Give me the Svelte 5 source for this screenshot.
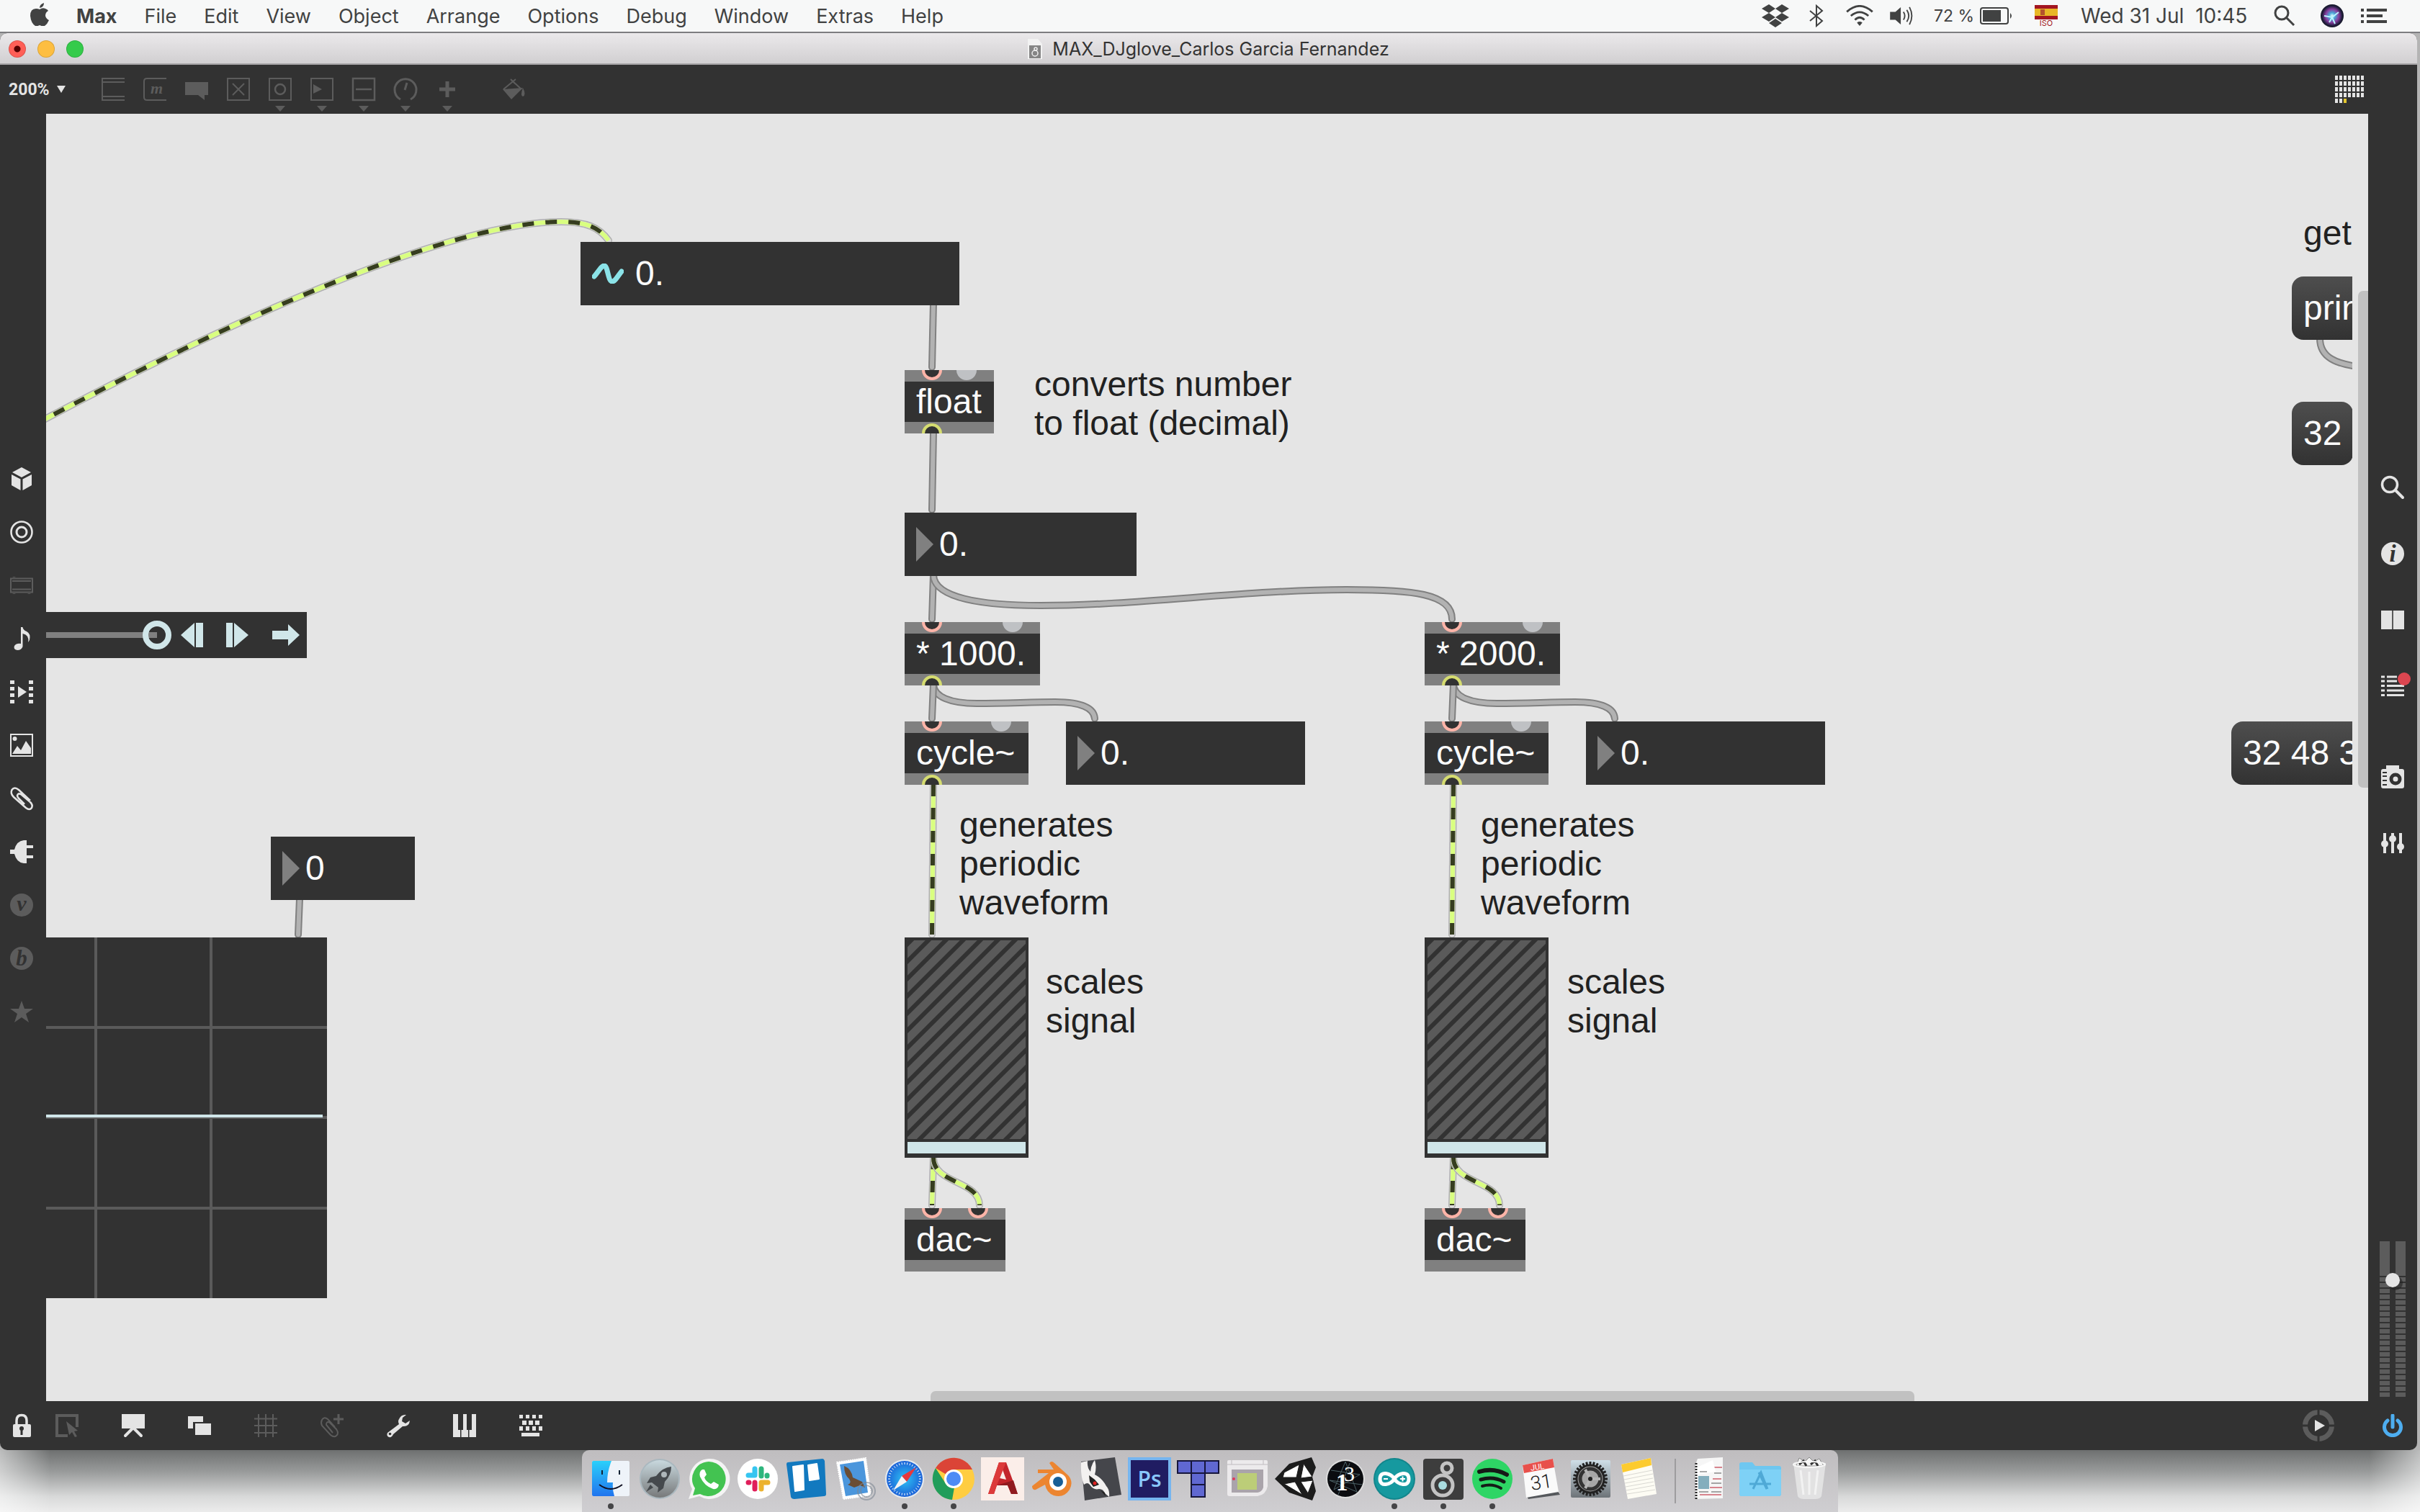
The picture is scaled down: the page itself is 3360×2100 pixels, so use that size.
<script>
  const menus = ['File', 'Edit', 'View', 'Object', 'Arrange', 'Options', 'Debug', 'Window', 'Extras', 'Help'];

  const ink = '#e4e4e4';

  // All toolbar glyphs are drawn on a 32 by 32 grid with currentColor.
  const glyphs = {
    object: '<path d="M1 0V32M2 1H32M2 6H32M2 26H32M2 31H32" fill="none" stroke="currentColor" stroke-width="2"/>',
    message: '<path d="M32 1H5Q1 1 1 5V27Q1 31 5 31H32" fill="none" stroke="currentColor" stroke-width="2"/><text x="10" y="22" font-family="Liberation Serif, serif" font-style="italic" font-weight="700" font-size="22" fill="currentColor">m</text>',
    comment: '<path d="M0 6H32V24H27V31L18 24H0Z" fill="currentColor"/>',
    toggle: '<path d="M1 1H31V31H1ZM8 8L24 24M24 8L8 24" fill="none" stroke="currentColor" stroke-width="2"/>',
    button: '<path d="M1 1H31V31H1Z" fill="none" stroke="currentColor" stroke-width="2"/><circle cx="16" cy="16" r="7" fill="none" stroke="currentColor" stroke-width="2.5"/>',
    playbox: '<path d="M1 1H31V31H1Z" fill="none" stroke="currentColor" stroke-width="2"/><path d="M4 9L16 16 4 22Z" fill="currentColor"/>',
    slider: '<path d="M1 1H31V31H1ZM5 16H27" fill="none" stroke="currentColor" stroke-width="2.5"/>',
    dial: '<path d="M9 30A15 15 0 1 1 23 30" fill="none" stroke="currentColor" stroke-width="3"/><path d="M15 17L18 7" fill="none" stroke="currentColor" stroke-width="3"/>',
    plus: '<path d="M16 5V27M5 16H27" fill="none" stroke="currentColor" stroke-width="5"/>',
    paint: '<path d="M12 2L18 8M19 2L2 16M14 4L27 16" fill="none" stroke="currentColor" stroke-width="2"/><path d="M1 16L29 14 13 30ZM29 14Q34 24 29 26Q25 25 29 14Z" fill="currentColor"/>',
    cube: '<path d="M16 0L29 7 16 14 3 7ZM2 10L14.500 16.500V32L2 25ZM30 10L17.500 16.500V32L30 25Z" fill="currentColor"/>',
    target: '<circle cx="16" cy="16" r="14.500" fill="none" stroke="currentColor" stroke-width="2.600"/><circle cx="16" cy="16" r="7" fill="none" stroke="currentColor" stroke-width="3"/>',
    rack: '<path d="M1 6.500H31V25.500H1ZM3 10H29M3 21.500H29" fill="none" stroke="currentColor" stroke-width="2"/><path d="M3 5a3 2 0 0 1 5 0ZM3 27a3 2 0 0 0 5 0ZM24 27a3 2 0 0 0 5 0Z" fill="currentColor"/>',
    note: '<path d="M15 0H17.500Q18 4 23 6Q29 9 27 18L25 21Q27 11 17.500 9V27Q16 32 10 32Q4 31 6 26Q9 22 15 23Z" fill="currentColor"/>',
    film: '<path d="M0 0h6v5H0ZM0 9h6v5H0ZM0 18h6v5H0ZM0 27h6v5H0ZM26 0h6v5h-6ZM26 9h6v5h-6ZM26 18h6v5h-6ZM26 27h6v5h-6ZM11 8L23 16 11 24Z" fill="currentColor"/>',
    picture: '<path d="M1 1H31V31H1Z" fill="none" stroke="currentColor" stroke-width="2"/><circle cx="6.500" cy="7" r="3" fill="currentColor"/><path d="M3 28L10 17 15 23 22 10 29 20V28Z" fill="currentColor"/>',
    clip: '<path d="M28 19L12 4Q6 -1 2.500 4Q0 9 5 14L22 29Q27 33 30 29Q32 25 28 21L15 10Q11 8 10 12Q10 14 12 16L20 24" fill="none" stroke="currentColor" stroke-width="2.600"/>',
    plug: '<path d="M0 13H6Q9 1 19 0H23V7H32V11H23V21H32V25H23V32H19Q9 31 6 19H0Z" fill="currentColor"/>',
    vizzie: '<circle cx="16" cy="16" r="16" fill="currentColor"/><text x="16" y="24" text-anchor="middle" font-family="Liberation Serif, serif" font-style="italic" font-weight="700" font-size="30" fill="#323232">v</text>',
    beap: '<circle cx="16" cy="16" r="16" fill="currentColor"/><text x="16" y="26" text-anchor="middle" font-family="Liberation Serif, serif" font-style="italic" font-weight="700" font-size="31" fill="#323232">b</text>',
    star: '<path d="M16 1L20 12H32L22 19 26 31 16 24 6 31 10 19 0 12H12Z" fill="currentColor"/>',
    search: '<circle cx="12" cy="12" r="10.500" fill="none" stroke="currentColor" stroke-width="3.500"/><path d="M20 20L30 30" stroke="currentColor" stroke-width="4" stroke-linecap="round"/>',
    info: '<circle cx="16" cy="16" r="16" fill="currentColor"/><text x="16" y="27" text-anchor="middle" font-family="Liberation Serif, serif" font-style="italic" font-weight="700" font-size="33" fill="#323232">i</text>',
    book: '<path d="M0 3H15V29H0ZM17 3H32V29H17Z" fill="currentColor"/><path d="M16 3V29" stroke="#5a5a5a" stroke-width="2"/>',
    console: '<path d="M0 3H5M8 3H22M0 9H5M8 9H22M0 15.500H5M8 15.500H32M0 22H5M8 22H32M0 28.500H5M8 28.500H32" stroke="currentColor" stroke-width="3"/>',
    camera: '<path d="M7 0H25V5H29Q32 5 32 8V29Q32 32 29 32H3Q0 32 0 29V8Q0 5 3 5H7Z" fill="currentColor"/><path d="M2 10H8M2 15H8M2 21H8M2 27H8" stroke="#323232" stroke-width="2"/><circle cx="20" cy="19" r="6" fill="none" stroke="#323232" stroke-width="5"/>',
    mixer: '<path d="M5 2V30M16 2V30M27 2V30" stroke="currentColor" stroke-width="4"/><circle cx="5" cy="17" r="5" fill="currentColor"/><circle cx="16" cy="10" r="5" fill="currentColor"/><circle cx="27" cy="21" r="5" fill="currentColor"/>',
    lock: '<path d="M9 15V9Q9 1.500 16 1.500T23 9V15" fill="none" stroke="currentColor" stroke-width="3.500"/><rect x="4" y="14" width="25" height="18" rx="2" fill="currentColor"/><circle cx="16" cy="20" r="3" fill="#323232"/><path d="M16 20V29" stroke="#323232" stroke-width="3"/>',
    select: '<path d="M30 18V2H2V30H17" fill="none" stroke="currentColor" stroke-width="4"/><path d="M15 10L31 23 26 24 30 31 27 32 23 25 19 29Z" fill="currentColor"/>',
    present: '<path d="M0 0H32V20H0Z" fill="currentColor"/><path d="M15 20L5 30M17 20L27 30" stroke="currentColor" stroke-width="4" stroke-linecap="round"/>',
    layers: '<path d="M0 3H21V11H7V20H0Z M10 13H32V29H10Z" fill="currentColor"/>',
    grid: '<path d="M6 0V32M16 0V32M26 0V32M0 6.500H32M0 16H32M0 26H32" stroke="currentColor" stroke-width="2" fill="none"/>',
    clipplus: '<path d="M25 0V14M18 7H32" stroke="currentColor" stroke-width="3"/><path d="M20 18L10 7Q5 3 2 8Q0 12 2 16L14 29Q19 33 22 30Q26 27 22 21L13 12Q8 9 8 15L17 26" fill="none" stroke="currentColor" stroke-width="2"/>',
    wrench: '<path d="M27 1Q20 0 17 7Q15 10 17 14L1 26Q-1 30 3 32Q7 33 9 28L22 17Q31 18 32 9L26 13 21 10 22 5Z" fill="currentColor"/><circle cx="4.500" cy="27.500" r="1.800" fill="#323232"/>',
    piano: '<path d="M0 0H7V22H10V32H0ZM14 0H19V22H21V32H11.500V22H14ZM26 0H32V32H22.500V22H26Z" fill="currentColor"/>',
    keyboard: '<path d="M0 1h5v5H0ZM9 1h5v5H9ZM18 1h5v5h-5ZM27 1h5v5h-5ZM4 9h6v6H4ZM13 9h6v6h-6ZM22 9h6v6h-6ZM0 17h5v6H0ZM9 17h5v6H9ZM18 17h5v6h-5ZM27 17h5v6h-5ZM3 26H28V31H3Z" fill="currentColor"/>'
  };

  const palette = [
    ['object', false], ['message', false], ['comment', false], ['toggle', false], ['button', true],
    ['playbox', true], ['slider', true], ['dial', true], ['plus', true]
  ];
  const browsers = [
    ['cube', true], ['target', true], ['rack', false], ['note', true], ['film', true], ['picture', true],
    ['clip', true], ['plug', true], ['vizzie', false], ['beap', false], ['star', false]
  ];
  const panels = ['search', 'info', 'book', 'console'];
  const extras = ['camera', 'mixer'];
  const tools = [
    ['select', false], ['present', true], ['layers', true], ['grid', false], ['clipplus', false],
    ['wrench', true], ['piano', true], ['keyboard', true]
  ];
  const gridCells = Array.from({ length: 31 }, (_, i) => i);
  const segments = Array.from({ length: 21 }, (_, i) => i);

  // Patcher coordinates; the visible canvas begins at the scroll origin.
  const origin = { x: 64, y: 158 };
  const branch = 722;

  const cords = [
    'M1296 420L1294 510', 'M1296 600L1294 708', 'M1296 798L1294 860', 'M416 1248L414 1298',
    'M1296 798C1296 830 1360 841 1445 841C1580 841 1730 819 1870 819C1960 819 2016 824 2016 860',
    'M3221 470C3221 495 3240 507 3290 511',
    ...[0, branch].flatMap((d) => [
      `M${1296 + d} 950C${1296 + d} 968 ${1320 + d} 977 ${1356 + d} 977C${1400 + d} 977 ${1430 + d} 975 ${1465 + d} 975C${1500 + d} 975 ${1519 + d} 983 ${1520 + d} 998`,
      `M${1296 + d} 950L${1294 + d} 998`
    ])
  ];
  const signals = [
    { d: 'M845 334C832 316 815 308 779 308C620 308 300 455 40 594', shift: 16 },
    ...[0, branch].flatMap((d) => [
      { d: `M${1296 + d} 1090L${1294 + d} 1298`, shift: 0 },
      { d: `M${1296 + d} 1608L${1294 + d} 1674`, shift: 0 },
      { d: `M${1296 + d} 1608C${1296 + d} 1644 ${1360 + d} 1640 ${1360 + d} 1674`, shift: 0 }
    ])
  ];

  const objects = [
    { t: 'float', x: 1256, y: 514, w: 124, idle: 86, out: true },
    ...[0, branch].flatMap((d) => [
      { t: d ? '* 2000.' : '* 1000.', x: 1256 + d, y: 864, w: 188, idle: 150, out: true },
      { t: 'cycle~', x: 1256 + d, y: 1002, w: 172, idle: 134, out: true },
      { t: 'dac~', x: 1256 + d, y: 1678, w: 140, second: 102, out: false }
    ])
  ];
  const numbers = [
    { v: '0', x: 376, y: 1162, w: 200 },
    { v: '0.', x: 1256, y: 712, w: 322 },
    { v: '0.', x: 1480, y: 1002, w: 332 },
    { v: '0.', x: 1480 + branch, y: 1002, w: 332 }
  ];
  const comments = [
    { lines: ['converts number', 'to float (decimal)'], x: 1436, y: 507 },
    { lines: ['get'], x: 3198, y: 297 },
    ...[0, branch + 2].flatMap((d) => [
      { lines: ['generates', 'periodic', 'waveform'], x: 1332 + d, y: 1119 },
      { lines: ['scales', 'signal'], x: 1452 + d, y: 1337 }
    ])
  ];
  const messages = [
    { t: 'print', x: 3182, y: 384 },
    { t: '32', x: 3182, y: 558 },
    { t: '32 48 32', x: 3098, y: 1002 }
  ];
  const gains = [0, branch].map((d) => ({ x: 1256 + d, y: 1302 }));

  const ticks = (n, r1, r2, c, w) =>
    Array.from({ length: n }, (_, i) => {
      const a = (i * 2 * Math.PI) / n;
      return `<path d="M${30 + r1 * Math.cos(a)} ${30 + r1 * Math.sin(a)}L${30 + r2 * Math.cos(a)} ${30 + r2 * Math.sin(a)}" stroke="${c}" stroke-width="${w}"/>`;
    }).join('');

  // Dock artwork, each on a 60 by 60 grid.
  const dock = [
    { n: 'Finder', on: true, s: '<rect x="4" y="5" width="52" height="49" rx="2" fill="#eef3f9"/><path d="M31 5H6Q4 5 4 7V52Q4 54 6 54H35Q32 44 33 35H25Q25 20 31 5Z" fill="url(#finder)"/><path d="M18 18V24M42 18V24" stroke="#123" stroke-width="2"/><path d="M14 38Q30 50 46 38" fill="none" stroke="#112" stroke-width="2"/>' },
    { n: 'Launchpad', s: '<circle cx="30" cy="30" r="28" fill="#aab8bf"/><circle cx="30" cy="30" r="26" fill="url(#silver)"/><path d="M46 13Q34 14 25 26L17 28 12 36 19 35 28 42 27 49 35 43 37 34Q46 25 46 13ZM17 38L11 48 21 42Z" fill="#45494d"/><circle cx="36" cy="24" r="4" fill="#aeb6ba"/>' },
    { n: 'WhatsApp', s: '<path d="M30 2A28 28 0 1 1 17 54L2 58 7 44A28 28 0 0 1 30 2Z" fill="#f4f4f4"/><path d="M30 6A24 24 0 1 1 18 51L8 53 11 43A24 24 0 0 1 30 6Z" fill="#43c351"/><path d="M21 17Q16 20 18 27Q24 40 36 44Q43 45 44 38L37 34 33 37Q26 34 24 28L27 24 24 17Z" fill="#fff"/>' },
    { n: 'Slack', s: '<circle cx="30" cy="30" r="28" fill="#fff"/><g stroke-width="7" stroke-linecap="round"><path d="M26 16V25M17 25H26" stroke="#36c5f0"/><path d="M35 16V26M43 25V26" stroke="#2eb67d"/><path d="M35 35H44M35 35V44" stroke="#ecb22e"/><path d="M17 35H18M26 35V44" stroke="#e01e5a"/></g>' },
    { n: 'Trello', s: '<path d="M4 7L52 2Q54 2 55 5L57 51Q57 54 54 54L13 58Q9 58 8 55L2 10Q2 7 4 7Z" fill="#1279bf"/><path d="M11 13L25 11 26 45 14 47ZM32 11L44 9 47 30 34 32Z" fill="#fff" stroke="#fff" stroke-width="2" stroke-linejoin="round"/>' },
    { n: 'Mail', s: '<path d="M4 7L44 1 51 53 13 58Z" fill="#fff" stroke="#fff" stroke-width="2" stroke-dasharray="2 1"/><path d="M8 10L41 5 47 49 16 54Z" fill="#4b96dc"/><path d="M14 12Q24 16 26 28L39 34 43 42 36 39 28 42 19 38Q25 36 21 30Q14 24 14 12Z" fill="#6a4d34"/><circle cx="45" cy="47" r="12" fill="none" stroke="#7d8792" opacity=".6" stroke-width="2"/><circle cx="45" cy="47" r="8" fill="none" stroke="#7d8792" opacity=".6" stroke-width="2"/>' },
    { n: 'Safari', on: true, s: '<circle cx="30" cy="30" r="27" fill="#e7ebee"/><circle cx="30" cy="30" r="25" fill="url(#safari)"/>' + ticks(36, 20, 23, '#fff', 1) + '<path d="M46 14L26 26 33 34Z" fill="#e8383c"/><path d="M14 46L26 26 33 34Z" fill="#f4f4f4"/>' },
    { n: 'Chrome', on: true, s: '<circle cx="30" cy="30" r="29" fill="#ffcd41"/><path d="M30 30L5 15A29 29 0 0 1 56 17H30Z" fill="#db4437"/><path d="M5 15L20 38 31 42 28 59A29 29 0 0 1 5 15Z" fill="#219d5b"/><circle cx="30" cy="30" r="13" fill="#fff"/><circle cx="30" cy="30" r="10" fill="#4c8bf5"/>' },
    { n: 'AutoCAD', s: '<rect y="0" width="60" height="60" fill="#fbeee9"/><path d="M10 51L25 7H35L51 51H42L37 39H22L18 51Z" fill="#c3252b"/><path d="M26 29L30 17 35 31Z" fill="#fbeee9"/><path d="M25 7L35 7 22 39 18 51H10Z" fill="#dc3a3a"/><path d="M37 39H22L45 32 51 51H42Z" fill="#901a1f"/>' },
    { n: 'Blender', s: '<path d="M3 40L26 22H11V17H33L27 8Q30 4 34 8L53 25Q61 34 55 45Q47 57 33 53Q23 49 21 38L8 45Q3 46 3 40Z" fill="#ec8530"/><circle cx="39" cy="34" r="12" fill="#fff"/><circle cx="39" cy="34" r="7" fill="#175e96"/>' },
    { n: 'Rhinoceros', s: '<path d="M3 6L50 0 59 52 8 60Z" fill="#45464b"/><path d="M3 7L12 5Q11 14 16 20Q17 10 22 4Q25 14 22 24Q32 29 38 40Q43 45 42 55L36 50Q34 44 28 44Q20 46 15 38Q12 34 7 38Q2 26 3 7Z" fill="#f3f1f0"/><path d="M14 25L22 31 28 38 20 41 15 34ZM30 46L36 49 37 54Z" fill="#222"/><circle cx="22" cy="36" r="2.500" fill="#d22"/>' },
    { n: 'Photoshop', s: '<rect y="0" width="60" height="60" fill="#76b5f0"/><rect x="4" y="4" width="52" height="52" fill="#201c62"/><text x="30" y="41" text-anchor="middle" font-family="Open Sans, sans-serif" font-weight="600" font-size="30" fill="#8ac8ff">Ps</text>' },
    { n: 'Tetris', s: '<g fill="#6068d2" stroke="#16163c" stroke-width="2"><rect x="1" y="5" width="19" height="17"/><rect x="20" y="5" width="19" height="17"/><rect x="39" y="5" width="19" height="17"/><rect x="20" y="22" width="19" height="16"/><rect x="20" y="38" width="19" height="17"/></g>' },
    { n: 'OpenEmu', s: '<path d="M2 6Q2 4 4 4H56Q58 4 58 6V40Q56 52 44 54H5Q2 54 2 51Z" fill="#eceaec"/><path d="M2 10H58M8 4V10M52 4V10" stroke="#c0bcc0" stroke-width="1"/><path d="M8 17H52V42Q50 48 44 49H8Z" fill="#aaa4ab"/><rect x="16" y="22" width="27" height="23" fill="#bccd78"/><circle cx="11" cy="30" r="2" fill="#e0395a"/>' },
    { n: 'Unity', s: '<path d="M0 30L20 9 51 0 57 14 52 27 57 47 52 60 20 49Z" fill="#1c1c1c"/><path d="M13 21L34 10 30 28H11ZM40 9L52 27 36 29ZM13 37L28 34 38 52ZM36 34L53 32 46 50Z" fill="#fff" stroke="#1c1c1c"/>' },
    { n: 'Processing', s: '<circle cx="30" cy="30" r="27" fill="#ddd"/><circle cx="30" cy="30" r="25" fill="#0b0c10"/><path d="M10 18L50 24 14 45 30 6 46 48 8 32 53 38M20 52L36 8" stroke="#4b6166" fill="none"/><text x="17" y="46" font-family="Liberation Serif, serif" font-weight="700" font-size="33" fill="#fff">1</text><text x="28" y="33" font-family="Liberation Serif, serif" font-size="30" fill="#fff">3</text>' },
    { n: 'Arduino', on: true, s: '<circle cx="30" cy="30" r="29" fill="#12868c"/><circle cx="30" cy="30" r="27" fill="#16999f"/><path d="M30 30C25 22 10 18 10 30S25 38 30 30S50 18 50 30S35 38 30 30Z" fill="none" stroke="#fff" stroke-width="5"/><path d="M15 30H21M38 30H45M41.500 26.500V33.500" stroke="#fff" stroke-width="2"/>' },
    { n: 'Max', on: true, s: '<rect x="2" y="2" width="56" height="57" rx="4" fill="#3d3d3d"/><circle cx="35" cy="15" r="7" fill="none" stroke="#c3c3c3" stroke-width="5"/><circle cx="29" cy="39" r="14" fill="none" stroke="#c3c3c3" stroke-width="5"/><circle cx="29" cy="39" r="6" fill="#a9dde0"/>' },
    { n: 'Spotify', on: true, s: '<circle cx="30" cy="30" r="28" fill="#2ed565"/><g fill="none" stroke="#151a17" stroke-linecap="round"><path d="M12 20Q32 14 50 24" stroke-width="6"/><path d="M14 31Q31 26 46 34" stroke-width="5"/><path d="M16 40Q30 36 42 43" stroke-width="4"/></g>' },
    { n: 'Calendar', s: '<path d="M9 52L50 43 56 52 12 58Z" fill="#55585c"/><path d="M4 11L46 2 54 48 9 56Z" fill="#fafafa"/><path d="M4 11L46 2 48 14 6 22Z" fill="#e8504b"/><g transform="rotate(-9 28 30)"><text x="27" y="17" text-anchor="middle" font-family="Roboto, sans-serif" font-size="11" fill="#fff">JUL</text><text x="29" y="44" text-anchor="middle" font-family="Roboto, sans-serif" font-weight="300" font-size="27" fill="#222">31</text></g>' },
    { n: 'System Preferences', s: '<rect x="3" y="4" width="55" height="52" rx="2" fill="url(#prefs)"/>' + ticks(28, 19, 24, '#222', 3) + '<circle cx="30" cy="30" r="19" fill="#a6a6a6" stroke="#222" stroke-width="3"/><circle cx="30" cy="30" r="14" fill="none" stroke="#333" stroke-width="5"/><path d="M30 30L44 30M30 30L23 17M30 30L23 43" stroke="#b4b4b4" stroke-width="4"/><circle cx="30" cy="30" r="3" fill="#222"/>' },
    { n: 'Notes', s: '<path d="M5 10L46 1 54 51 14 58Z" fill="#fdfcf4"/><path d="M5 10L46 1 47 11 7 21Z" fill="#fccb2f"/><path d="M8 26L48 18M9 31L49 23M10 36L49 29M11 41L50 34M12 46L51 39M13 51L52 45" stroke="#d9d8d2"/>' }
  ];
  const stacks = [
    { n: 'Documents', s: '<path d="M11 2L46 0V57L8 58V10Z" fill="#f6f6f6"/><path d="M26 14H45M32 30H44M28 42H45M14 52H44" stroke="#d7848d" stroke-width="2"/><path d="M10 14L32 4 36 20 10 24Z" fill="#fff"/><path d="M12 26H27V44H12Z" fill="#84aebd"/><path d="M14 20H24M13 48H26M30 36H44M30 48H44M34 22H44" stroke="#555"/><path d="M9 8V58" stroke="#222" stroke-width="3" stroke-dasharray="2 2"/>' },
    { n: 'Applications', s: '<path d="M1 10Q1 7 4 7H19L23 12H56Q59 12 59 15V50Q59 54 56 54H4Q1 54 1 50Z" fill="#6ec7f0"/><path d="M1 17H59V50Q59 54 56 54H4Q1 54 1 50Z" fill="#7ed1f6"/><path d="M20 44L31 21 40 44M15 37H45M28 21L39 44" fill="none" stroke="#4fa9d6" stroke-width="3"/>' },
    { n: 'Trash', s: '<path d="M8 8H53L47 54Q45 58 38 58H23Q16 58 14 54Z" fill="#e6e6e6" opacity=".85"/><path d="M12 12L16 1 24 6 30 0 36 6 44 2 50 12Z" fill="#f3f3f3" stroke="#8a8a8a"/><path d="M16 10L22 5 26 12M32 10L38 5 42 12" stroke="#333" stroke-width="3" fill="none"/><ellipse cx="30" cy="10" rx="22" ry="4" fill="none" stroke="#f8f8f8" stroke-width="2"/><path d="M18 18L22 52M30 20V52M42 18L38 52" stroke="#fafafa" stroke-width="3" opacity=".7"/>' }
  ];
</script>

{#snippet glyph(name)}
  <svg class="glyph" viewBox="0 0 32 32" aria-hidden="true">{@html glyphs[name]}</svg>
{/snippet}

{#snippet dockItem(app)}
  <li>
    <button class="app" aria-label={app.n}><svg viewBox="0 0 60 60" aria-hidden="true">{@html app.s}</svg></button>
    {#if app.on}<span class="running"></span>{/if}
  </li>
{/snippet}

<svg class="defs" aria-hidden="true">
  <defs>
    <linearGradient id="finder" x2="0" y2="1"><stop stop-color="#2bd0fb" /><stop offset="1" stop-color="#2074ee" /></linearGradient>
    <linearGradient id="silver" x2="0" y2="1"><stop stop-color="#c8d8de" /><stop offset="1" stop-color="#77797a" /></linearGradient>
    <radialGradient id="safari"><stop stop-color="#2fc4f4" /><stop offset="1" stop-color="#1b62d8" /></radialGradient>
    <linearGradient id="prefs" x2="0" y2="1"><stop stop-color="#cfdfe8" /><stop offset="1" stop-color="#6d7378" /></linearGradient>
    <radialGradient id="siri"><stop stop-color="#e8ffff" /><stop offset=".3" stop-color="#48a7d8" /><stop offset=".65" stop-color="#8a3fa0" /><stop offset="1" stop-color="#1c1c3c" /></radialGradient>
    <pattern id="hatch" width="24" height="24" patternUnits="userSpaceOnUse">
      <path d="M-7 12L12 -7M-7 36L36 -7M17 36L36 17" stroke="#323232" stroke-width="6" />
    </pattern>
  </defs>
</svg>

<div class="desktop">
  <header class="menubar">
    <nav aria-label="Application menu">
      <button class="apple" aria-label="Apple">
        <svg viewBox="0 0 26 32" aria-hidden="true"><path d="M13 9Q17 6 21 8Q24 9 25 11Q21 13 21 18Q22 22 26 24Q24 29 20 32Q17 33 13 31Q9 33 7 32Q1 28 0 18Q0 8 8 8Q11 8 13 9ZM13 7Q13 2 19 0Q19 6 13 7Z" /></svg>
      </button>
      <button class="current">Max</button>
      {#each menus as item}<button>{item}</button>{/each}
    </nav>
    <div class="status">
      <svg class="dropbox" viewBox="0 0 38 32" aria-hidden="true"><path d="M10 0L19 6 10 12 0 6ZM28 0L38 6 28 12 19 6ZM10 12L19 18 10 24 0 18ZM28 12L38 18 28 24 19 18ZM19 20L28 26 19 32 10 26Z" /></svg>
      <svg class="bluetooth" viewBox="0 0 20 32" aria-hidden="true"><path d="M1 9L18 23 10 30V2L18 9 1 23" class="line" /></svg>
      <svg class="wifi" viewBox="0 0 42 32" aria-hidden="true"><path d="M2 10Q21 -7 40 10M8 16Q21 5 34 16M14 22Q21 15 28 22" class="thick" /><path d="M17 26Q21 23 25 26L21 31Z" /></svg>
      <svg class="volume" viewBox="0 0 34 28" aria-hidden="true"><path d="M0 8H8L16 1V27L8 20H0Z" /><path d="M20 8Q24 14 20 20M25 5Q31 14 25 23M29 1Q36 14 29 27" class="line" /></svg>
      <span class="percent">72 %</span>
      <svg class="battery" viewBox="0 0 46 24" aria-hidden="true"><rect x="1" y="1" width="38" height="22" rx="3" class="line" /><rect x="4" y="4" width="25" height="16" /><path d="M42 8Q46 12 42 16Z" /></svg>
      <span class="flag"><svg viewBox="0 0 32 20" aria-hidden="true"><rect width="32" height="20" fill="#a31621" /><rect y="5" width="32" height="10" fill="#e8b626" /><rect x="8" y="6" width="6" height="8" fill="#b4512c" /></svg>ISO</span>
      <span class="clock">Wed 31 Jul&nbsp; 10:45</span>
      <svg class="spot" viewBox="0 0 30 30" aria-hidden="true"><circle cx="11" cy="11" r="9" class="thick" /><path d="M18 18L28 28" class="thick" /></svg>
      <svg class="siri" viewBox="0 0 32 32" aria-hidden="true"><circle cx="16" cy="16" r="16" fill="#1b1b30" /><circle cx="16" cy="16" r="14" fill="url(#siri)" /><path d="M5 16L16 18 25 11M12 25L16 18 20 27" stroke="#b8f4ff" stroke-width="2" fill="none" /></svg>
      <svg class="list" viewBox="0 0 36 20" aria-hidden="true"><path d="M0 2H4M8 2H36M0 10H4M8 10H30M0 18H4M8 18H36" class="bar" /></svg>
    </div>
  </header>

  <main class="window">
    <div class="titlebar">
      <div class="lights">
        <button class="close" aria-label="Close"></button>
        <button class="mini" aria-label="Minimise"></button>
        <button class="full" aria-label="Zoom"></button>
      </div>
      <h1>
        <svg viewBox="0 0 20 28" aria-hidden="true"><path d="M0 0H14L20 7V28H0Z" fill="#f2f2f2" /><rect x="2" y="9" width="16" height="18" fill="#858585" /><circle cx="11" cy="14" r="2" class="eight" /><circle cx="10" cy="20" r="4" class="eight" /></svg>
        MAX_DJglove_Carlos Garcia Fernandez
      </h1>
    </div>

    <div class="toolbar">
      <button class="zoom">200% <svg viewBox="0 0 12 10" aria-hidden="true"><path d="M0 0H12L6 10Z" /></svg></button>
      <div class="palette">
        {#each palette as [name, more]}
          <button class="tool" aria-label={name}>{@render glyph(name)}{#if more}<svg class="more" viewBox="0 0 14 8" aria-hidden="true"><path d="M0 0H14L7 8Z" /></svg>{/if}</button>
        {/each}
        <button class="tool paint" aria-label="format">{@render glyph('paint')}</button>
      </div>
      <button class="cells" aria-label="Object palette">
        {#each gridCells as i}<span class:hot={i === 30}></span>{/each}
      </button>
    </div>

    <div class="middle">
      <aside class="left">
        {#each browsers as [name, on]}
          <button class="tool" class:on aria-label={name}>{@render glyph(name)}</button>
        {/each}
      </aside>

      <section class="canvas" aria-label="Patcher">
        <div class="patch">
          <svg class="wires" aria-hidden="true">
            <g transform="translate({-origin.x} {-origin.y})">
              {#each cords as d}
                <path {d} class="cord-edge" /><path {d} class="cord" />
              {/each}
              {#each signals as s}
                <path d={s.d} class="sig-edge" /><path d={s.d} class="sig-gap" /><path d={s.d} class="sig" />
                <path d={s.d} class="sig-dash" stroke-dashoffset={-s.shift} />
              {/each}
            </g>
          </svg>

          <label class="number signal" style:left="{806 - origin.x}px" style:top="{336 - origin.y}px" style:width="526px">
            <svg class="wave" viewBox="0 0 44 28" aria-hidden="true"><path d="M3 18C9 11 13 3 17 3C22 3 22 25 28 25C32 25 36 17 41 11" /></svg>
            <input value="0." aria-label="Signal value" />
          </label>

          {#each numbers as n}
            <label class="number" style:left="{n.x - origin.x}px" style:top="{n.y - origin.y}px" style:width="{n.w}px">
              <svg class="tri" viewBox="0 0 24 48" aria-hidden="true"><path d="M0 0L24 24 0 48Z" /></svg>
              <input value={n.v} aria-label="Number" />
            </label>
          {/each}

          {#each objects as o}
            <div class="object" style:left="{o.x - origin.x}px" style:top="{o.y - origin.y}px" style:width="{o.w}px">
              <svg class="ports" width={o.w} height="88" aria-hidden="true">
                <circle cx="38" cy="0" r="12" class="inlet" />
                {#if o.idle}<circle cx={o.idle} cy="0" r="14" class="idle" />{/if}
                {#if o.second}<circle cx={o.second} cy="0" r="12" class="inlet" />{/if}
                {#if o.out}<circle cx="38" cy="88" r="12" class="outlet" />{/if}
              </svg>
              <span>{o.t}</span>
            </div>
          {/each}

          {#each comments as c}
            <p class="comment" style:left="{c.x - origin.x}px" style:top="{c.y - origin.y}px">
              {#each c.lines as line}<span>{line}</span>{/each}
            </p>
          {/each}

          {#each gains as g}
            <label class="gain" style:left="{g.x - origin.x}px" style:top="{g.y - origin.y}px">
              <svg viewBox="0 0 164 276" aria-hidden="true"><rect width="164" height="276" fill="#5a5a5a" /><rect width="164" height="276" fill="url(#hatch)" /></svg>
              <span class="level"></span>
              <input type="range" value="0" aria-label="Gain" />
            </label>
          {/each}

          {#each messages as m}
            <button class="msg" style:left="{m.x - origin.x}px" style:top="{m.y - origin.y}px">{m.t}</button>
          {/each}

          <div class="playbar">
            <svg viewBox="0 0 362 64" aria-hidden="true">
              <path d="M0 32H154" stroke="#808080" stroke-width="8" />
              <circle cx="154" cy="32" r="16" fill="none" stroke="#d0e6e9" stroke-width="8" />
              <path d="M187 32L206 15V49ZM208 15H218V49H208ZM250 15H259V49H250ZM261 15L281 32 261 49ZM314 26H336V17L352 32 336 47V38H314Z" fill="#d0e6e9" />
            </svg>
            <input type="range" value="100" aria-label="Position" />
          </div>

          <svg class="plot" viewBox="0 0 390 501" aria-hidden="true">
            <rect width="390" height="501" fill="#323232" />
            <path d="M69 0V501M229 0V501M0 125H390M0 250H390M0 376H390" fill="none" stroke="#5a5a5a" stroke-width="4" />
            <path d="M0 248H384" stroke="#d0e6e9" stroke-width="4" />
          </svg>
        </div>
        <div class="vbar"></div>
        <div class="hbar"></div>
      </section>

      <aside class="right">
        {#each panels as name}
          <button class="tool on" aria-label={name}>{@render glyph(name)}{#if name === 'console'}<span class="badge"></span>{/if}</button>
        {/each}
        <div class="extra">
          {#each extras as name}<button class="tool on" aria-label={name}>{@render glyph(name)}</button>{/each}
        </div>
        <label class="meter">
          <svg viewBox="0 0 36 216" aria-hidden="true">
            <path d="M0 0H14V48H0ZM22 0H36V48H22Z" fill="#5c5c5c" />
            {#each segments as i}<rect y={50 + i * 8} width="14" height="6" fill="#5c5c5c" /><rect x="22" y={50 + i * 8} width="14" height="6" fill="#5c5c5c" />{/each}
            <circle cx="22" cy="58" r="10" fill="#222" opacity=".6" /><circle cx="18" cy="54" r="10" fill={ink} />
          </svg>
          <input type="range" value="75" aria-label="Output level" />
        </label>
      </aside>
    </div>

    <footer class="bottombar">
      <button class="tool on lock" aria-label="lock">{@render glyph('lock')}</button>
      <div class="tools">
        {#each tools as [name, on]}<button class="tool" class:on aria-label={name}>{@render glyph(name)}</button>{/each}
      </div>
      <button class="transport" aria-label="Play">
        <svg viewBox="0 0 46 46" aria-hidden="true"><circle cx="23" cy="23" r="18.500" fill="none" stroke="#5c5c5c" stroke-width="7" /><path d="M23 0V46M0 23H46" stroke="#323232" stroke-width="3" /><circle cx="23" cy="23" r="14" fill="#323232" /><path d="M18 15L32 23 18 31Z" fill={ink} /></svg>
      </button>
      <button class="power" aria-label="Audio on">
        <svg viewBox="0 0 32 32" aria-hidden="true"><path d="M9 9A11.500 11.500 0 1 0 23 9M16 2V18" fill="none" stroke="#4eaef0" stroke-width="5" stroke-linecap="round" /></svg>
      </button>
    </footer>
  </main>

  <div class="shelf">
    <ul class="dock">
      {#each dock as app}{@render dockItem(app)}{/each}
      <li class="rule"></li>
      {#each stacks as app}{@render dockItem(app)}{/each}
    </ul>
  </div>
</div>

<style>
  :global(body) { margin: 0; }
  .defs { position: absolute; width: 0; height: 0; }
  button { border: 0; padding: 0; margin: 0; background: none; color: inherit; font: inherit; }
  svg { display: block; }
  .desktop {
    display: flex; flex-direction: column; min-height: 100vh; overflow: hidden;
    background: #b4b4b4; font-family: Inter, 'Liberation Sans', sans-serif;
  }

  .menubar {
    display: flex; justify-content: space-between; align-items: center; height: 44px;
    background: #f7f8f8; border-bottom: 2px solid #7d7d80; color: #414242; font-size: 27px; box-sizing: content-box;
  }
  .menubar nav { display: flex; align-items: center; gap: 38px; padding-left: 42px; white-space: nowrap; }
  .menubar .current { font-weight: 700; }
  .apple svg { width: 26px; height: 32px; margin-bottom: 4px; fill: #414242; }
  .status { display: flex; align-items: center; padding-right: 46px; fill: #414242; white-space: nowrap; }
  .status .line { fill: none; stroke: #414242; stroke-width: 2; }
  .status .thick { fill: none; stroke: #414242; stroke-width: 3; }
  .status .bar { stroke: #414242; stroke-width: 4; }
  .dropbox { width: 38px; height: 32px; margin-right: 28px; }
  .bluetooth { width: 20px; height: 32px; margin-right: 29px; }
  .wifi { width: 42px; height: 30px; margin-right: 20px; }
  .volume { width: 34px; height: 26px; margin-right: 28px; }
  .percent { font-size: 23px; width: 56px; margin-right: 8px; }
  .battery { width: 46px; height: 24px; margin-right: 30px; }
  .flag { display: flex; flex-direction: column; align-items: center; width: 32px; margin-right: 32px; font-size: 11px; line-height: 11px; color: #a31621; }
  .flag svg { width: 32px; height: 20px; }
  .clock { width: 228px; margin-right: 40px; font-size: 28px; }
  .spot { width: 30px; height: 30px; margin-right: 35px; }
  .siri { width: 32px; height: 32px; margin-right: 24px; }
  .list { width: 36px; height: 20px; }

  .window { display: flex; flex-direction: column; flex: 1; margin-right: 4px; border-radius: 10px; overflow: hidden; background: #323232; }
  .titlebar {
    display: grid; grid-template-columns: 1fr auto 1fr; align-items: center; height: 40px; padding-top: 2px;
    background: linear-gradient(#ebe9eb, #d1cfd1); border-bottom: 2px solid #a5a3a5;
  }
  .lights { display: flex; gap: 16px; padding-left: 12px; }
  .lights button { width: 24px; height: 24px; border-radius: 50%; border: 1px solid #0002; }
  .close { background: radial-gradient(#500 0 4px, #ff5f57 5px); }
  .mini { background: #fdbe41; }
  .full { background: #35cb4b; }
  h1 { display: flex; align-items: center; gap: 14px; margin: 0; font-size: 25px; font-weight: 400; line-height: 32px; color: #333; }
  h1 svg { width: 20px; height: 28px; }
  .eight { fill: none; stroke: #eee; stroke-width: 1.500; }

  .tool { position: relative; display: block; width: 32px; height: 32px; color: #5c5c5c; }
  .tool.on { color: #e4e4e4; }
  .glyph { width: 32px; height: 32px; overflow: visible; }
  .toolbar { display: flex; align-items: center; height: 68px; padding: 0 74px 0 12px; }
  .zoom { display: flex; align-items: center; gap: 10px; width: 129px; color: #e4e4e4; font: 700 23px Roboto, sans-serif; }
  .zoom svg { width: 12px; height: 10px; fill: #e4e4e4; }
  .palette { display: flex; flex: 1; gap: 26px; }
  .more { position: absolute; left: 9px; top: 39px; width: 14px; height: 8px; fill: #5c5c5c; }
  .paint { margin-left: 34px; }
  .cells { display: grid; grid-template-columns: repeat(7, 4px); grid-auto-rows: 6px; gap: 2px; }
  .cells span { background: #e4e4e4; }
  .cells .hot { background: #e3c72f; }

  .middle { display: flex; flex: 1; }
  .left { display: flex; flex-direction: column; gap: 42px; width: 50px; padding: 491px 0 0 14px; }
  .right { display: flex; flex-direction: column; align-items: center; gap: 60px; width: 68px; padding-top: 503px; }
  .badge { position: absolute; left: 23px; top: -3px; width: 18px; height: 18px; border-radius: 50%; background: #dc4650; }
  .extra { display: flex; flex-direction: column; gap: 60px; padding-top: 34px; }
  .meter { position: relative; display: block; width: 36px; margin: auto 0 6px; }
  .meter svg { width: 36px; height: 216px; }
  .meter input, .gain input, .playbar input { position: absolute; inset: 0; width: 100%; height: 100%; margin: 0; opacity: 0; }

  .canvas { position: relative; flex: 1; background: #e5e5e5; }
  .patch { position: absolute; inset: 0 22px 0 0; overflow: hidden; font: 48px/54px 'Liberation Sans', Arial, sans-serif; }
  .wires { position: absolute; inset: 0; width: 100%; height: 100%; }
  .wires path { fill: none; stroke-linecap: round; }
  .cord-edge { stroke: #808080; stroke-width: 10; }
  .cord { stroke: #b2b2b2; stroke-width: 6; }
  .sig-edge { stroke: #b0b0b0; stroke-width: 10; }
  .sig-gap { stroke: #dedede; stroke-width: 7; }
  .wires .sig { stroke: #d9ff80; stroke-width: 6; stroke-linecap: butt; }
  .wires .sig-dash { stroke: #363d20; stroke-width: 6; stroke-linecap: butt; stroke-dasharray: 16 16; }

  .number { position: absolute; display: flex; align-items: center; gap: 8px; box-sizing: border-box; height: 88px; padding: 0 16px; background: #323232; }
  .number input { flex: 1; min-width: 0; height: 56px; border: 0; padding: 0 0 2px; background: none; color: #fafafa; font: inherit; outline: 0; }
  .tri { width: 24px; height: 48px; fill: #808080; }
  .signal { gap: 16px; }
  .wave { width: 44px; height: 28px; fill: none; stroke: #8be3e8; stroke-width: 7; stroke-linecap: round; }
  .object { position: absolute; box-sizing: border-box; height: 88px; border: solid #808080; border-width: 16px 0; padding-left: 16px; background: #323232; color: #fafafa; line-height: 56px; white-space: nowrap; }
  .ports { position: absolute; left: 0; top: -16px; overflow: hidden; }
  .inlet { fill: #323232; stroke: #ffb4a8; stroke-width: 4; }
  .outlet { fill: #323232; stroke: #d5dc70; stroke-width: 4; }
  .idle { fill: #bfc1c4; }
  .comment { position: absolute; display: flex; flex-direction: column; margin: 0; color: #212121; white-space: nowrap; }
  .gain { position: absolute; box-sizing: border-box; display: flex; flex-direction: column; gap: 4px; width: 172px; height: 306px; padding: 4px; background: #323232; }
  .gain svg { width: 164px; height: 276px; }
  .level { height: 16px; background: #d0e6e9; }
  .msg { position: absolute; height: 88px; padding: 0 16px; border-radius: 16px; background: linear-gradient(#4e4e4e, #323232); color: #fafafa; font: inherit; white-space: nowrap; }
  .playbar { position: absolute; left: 0; top: 692px; width: 362px; height: 64px; background: #323232; }
  .plot { position: absolute; left: 0; top: 1144px; width: 390px; height: 501px; }
  .vbar { position: absolute; right: 0; top: 246px; width: 14px; height: 690px; border-radius: 7px 0 0 7px; background: #c1c1c1; }
  .hbar { position: absolute; left: 1228px; bottom: 0; width: 1366px; height: 14px; border-radius: 7px 7px 0 0; background: #c1c1c1; }

  .bottombar { display: flex; align-items: center; height: 68px; padding: 0 18px 0 14px; }
  .tools { display: flex; flex: 1; gap: 60px; padding-left: 31px; }
  .transport { width: 46px; margin-right: 64px; }
  .transport svg { width: 46px; height: 46px; }
  .power svg { width: 32px; height: 32px; }

  .shelf {
    display: flex; justify-content: center; height: 86px;
    background:
      linear-gradient(90deg, #fff8, #fff0 70px calc(100% - 70px), #fff8),
      linear-gradient(#6e7070, #999b9b 35%, #d8d9d9 75%, #ececec);
  }
  .dock { display: flex; box-sizing: border-box; margin: 0; padding: 10px 6px 0; list-style: none; border-radius: 10px 10px 0 0; background: linear-gradient(#bfbdbf, #cfced1); }
  .dock li { position: relative; display: flex; justify-content: center; align-items: flex-start; width: 68px; }
  .app svg { width: 60px; height: 60px; }
  .running { position: absolute; left: 30px; top: 64px; width: 8px; height: 8px; border-radius: 50%; background: #454547; }
  .dock .rule { width: 2px; height: 62px; margin: 2px 15px 0; background: #9d9c9e; }
</style>
